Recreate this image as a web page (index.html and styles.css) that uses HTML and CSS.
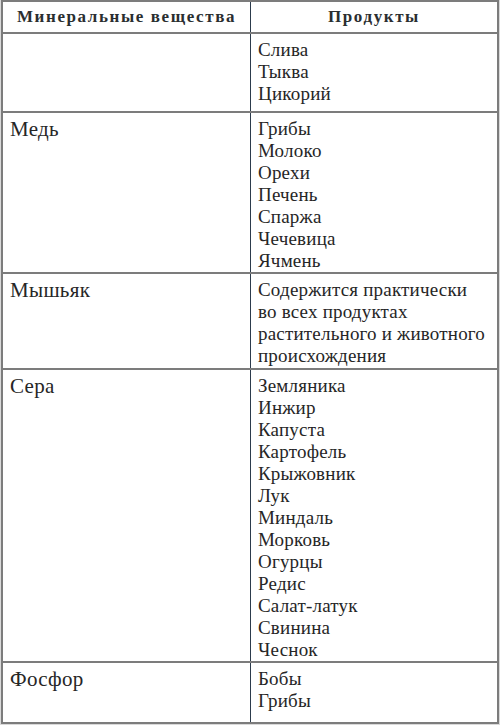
FILE: index.html
```html
<!DOCTYPE html>
<html lang="ru">
<head>
<meta charset="utf-8">
<link rel="stylesheet" href="styles.css">
</head>
<body>
<table class="tbl">
  <thead>
    <tr class="head">
      <th class="c1">Минеральные вещества</th>
      <th class="c2">Продукты</th>
    </tr>
  </thead>
  <tbody>
    <tr class="r1">
      <td class="c1"></td>
      <td class="c2">Слива<br>Тыква<br>Цикорий</td>
    </tr>
    <tr class="r2">
      <td class="c1">Медь</td>
      <td class="c2">Грибы<br>Молоко<br>Орехи<br>Печень<br>Спаржа<br>Чечевица<br>Ячмень</td>
    </tr>
    <tr class="r3">
      <td class="c1">Мышьяк</td>
      <td class="c2">Содержится практически<br>во всех продуктах<br>растительного и животного<br>происхождения</td>
    </tr>
    <tr class="r4">
      <td class="c1">Сера</td>
      <td class="c2">Земляника<br>Инжир<br>Капуста<br>Картофель<br>Крыжовник<br>Лук<br>Миндаль<br>Морковь<br>Огурцы<br>Редис<br>Салат-латук<br>Свинина<br>Чеснок</td>
    </tr>
    <tr class="r5">
      <td class="c1">Фосфор</td>
      <td class="c2">Бобы<br>Грибы</td>
    </tr>
  </tbody>
</table>
</body>
</html>
```
FILE: styles.css
```css
html, body {
  margin: 0;
  padding: 0;
  background: #d9d9d9;
}
body {
  width: 500px;
  height: 725px;
  overflow: hidden;
}
.tbl {
  border-collapse: collapse;
  margin: 0 0 0 1px;
  width: 498px;
  background: #fff;
  font-family: "Liberation Serif", "Times New Roman", serif;
  color: #262626;
  border: 2px solid #7c7c7c;
}
.tbl th, .tbl td {
  padding: 0 7px;
  vertical-align: top;
  text-align: left;
  border-top: 2px solid #7c7c7c;
  border-bottom: 2px solid #7c7c7c;
}
.tbl .c1 {
  width: 233px;
  border-right: 1px solid #2c3b4c;
}
.head th {
  height: 30px;
  vertical-align: middle;
  text-align: center;
  font-weight: bold;
  font-size: 17px;
  letter-spacing: 1.6px;
  color: #2a2e30;
}
.tbl td {
  font-size: 19px;
  line-height: 22px;
  letter-spacing: 0.2px;
  padding-top: 5px;
}
.tbl td.c1 {
  font-size: 21px;
  letter-spacing: 0.3px;
  padding-left: 7px;
}
.r1 td { height: 72px; }
.r2 td { height: 154px; }
.r3 td { height: 89px; }
.r4 td { height: 286px; }
.r5 td { height: 54px; }
```
